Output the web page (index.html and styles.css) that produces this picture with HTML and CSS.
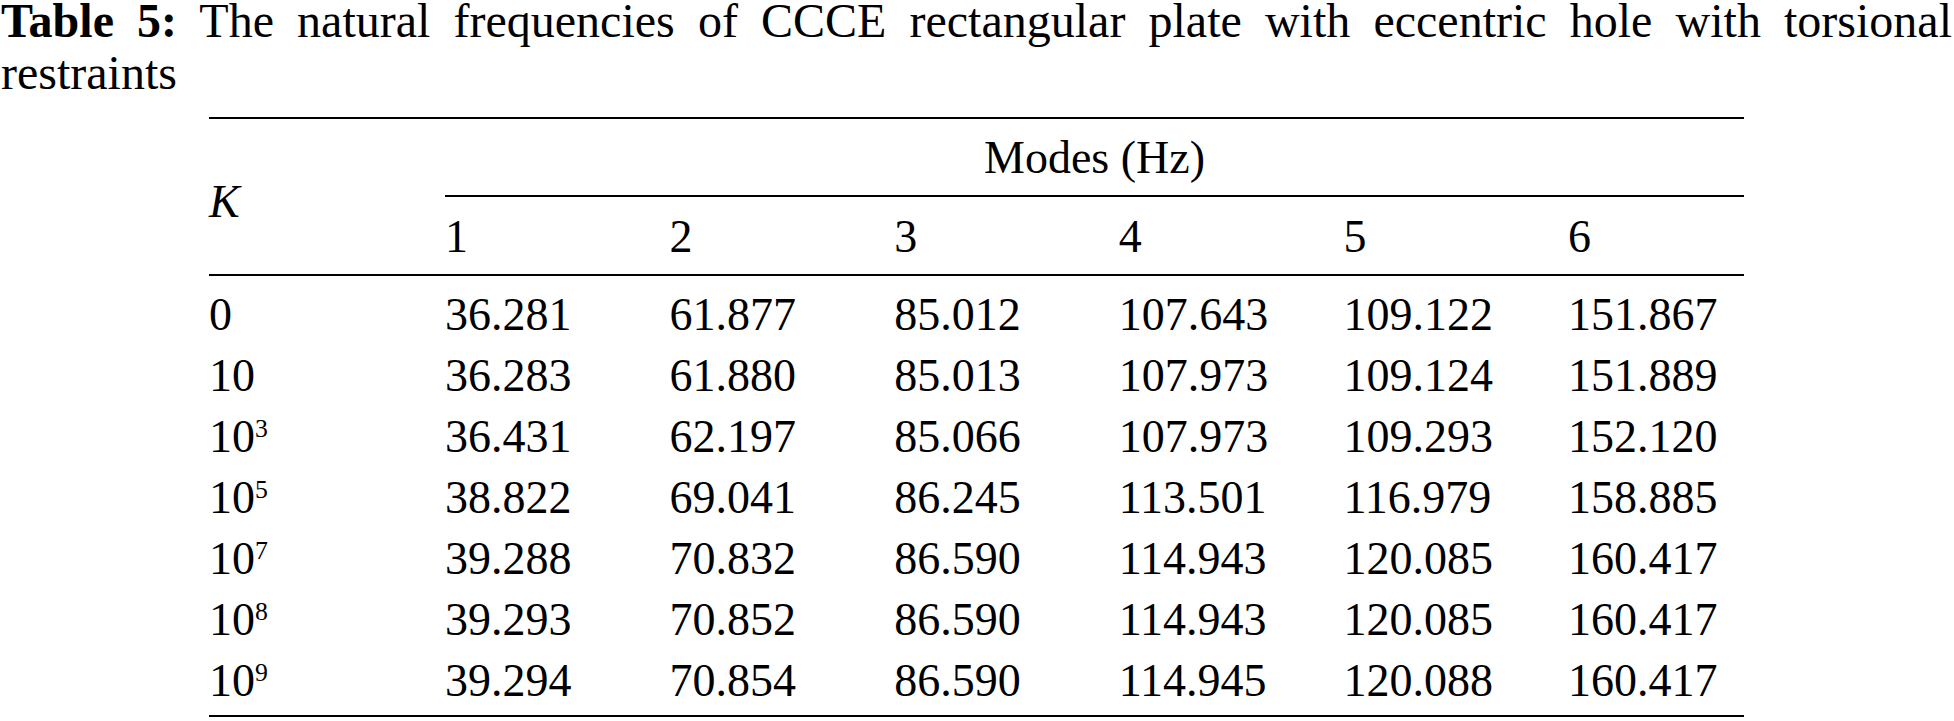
FILE: index.html
```html
<!DOCTYPE html>
<html lang="en">
<head>
<meta charset="utf-8">
<title>Table 5</title>
<link rel="stylesheet" href="styles.css">
</head>
<body>
<p class="caption"><strong>Table 5:</strong> The natural frequencies of CCCE rectangular plate with eccentric hole with torsional restraints</p>
<table class="data">
  <colgroup>
    <col class="c-k">
    <col class="c-m"><col class="c-m"><col class="c-m"><col class="c-m"><col class="c-m">
    <col class="c-last">
  </colgroup>
  <thead>
    <tr class="h1">
      <th class="k" rowspan="2"><i>K</i></th>
      <th class="modes" colspan="6">Modes (Hz)</th>
    </tr>
    <tr class="h2">
      <th>1</th><th>2</th><th>3</th><th>4</th><th>5</th><th>6</th>
    </tr>
  </thead>
  <tbody>
    <tr class="first"><td>0</td><td>36.281</td><td>61.877</td><td>85.012</td><td>107.643</td><td>109.122</td><td>151.867</td></tr>
    <tr><td>10</td><td>36.283</td><td>61.880</td><td>85.013</td><td>107.973</td><td>109.124</td><td>151.889</td></tr>
    <tr><td>10<sup>3</sup></td><td>36.431</td><td>62.197</td><td>85.066</td><td>107.973</td><td>109.293</td><td>152.120</td></tr>
    <tr><td>10<sup>5</sup></td><td>38.822</td><td>69.041</td><td>86.245</td><td>113.501</td><td>116.979</td><td>158.885</td></tr>
    <tr><td>10<sup>7</sup></td><td>39.288</td><td>70.832</td><td>86.590</td><td>114.943</td><td>120.085</td><td>160.417</td></tr>
    <tr><td>10<sup>8</sup></td><td>39.293</td><td>70.852</td><td>86.590</td><td>114.943</td><td>120.085</td><td>160.417</td></tr>
    <tr class="last"><td>10<sup>9</sup></td><td>39.294</td><td>70.854</td><td>86.590</td><td>114.945</td><td>120.088</td><td>160.417</td></tr>
  </tbody>
</table>
</body>
</html>
```

FILE: styles.css
```css
html, body {
  margin: 0;
  padding: 0;
  background: #ffffff;
  color: #000000;
}

body {
  font-family: "Liberation Serif", "Times New Roman", serif;
  width: 1954px;
}

.caption {
  margin: -5px 0 0 0;
  padding: 0 2px 0 1px;
  font-size: 48px;
  line-height: 52px;
  text-align: justify;
}

.caption strong {
  font-weight: bold;
}

.data {
  margin: 18px 0 0 209px;
  width: 1535px;
  table-layout: fixed;
  border-collapse: collapse;
  border-spacing: 0;
  font-size: 46px;
  line-height: 61px;
  border-top: 2px solid #000;
  border-bottom: 2px solid #000;
}

.c-k { width: 236px; }
.c-m { width: 224.6px; }
.c-last { width: 176px; }

.data th,
.data td {
  padding: 0;
  text-align: left;
  font-weight: normal;
  white-space: nowrap;
}

.h1 th {
  padding-top: 8px;
  padding-bottom: 7px;
}

.h1 .modes {
  text-align: center;
  border-bottom: 2px solid #000;
}

.h1 .k {
  vertical-align: top;
  padding-top: 52px;
  border-bottom: 2px solid #000;
}

.h2 th {
  padding-top: 9px;
  padding-bottom: 7px;
  border-bottom: 2px solid #000;
}

.data .first td {
  padding-top: 8px;
}

.data .last td {
  padding-bottom: 4px;
}

.data sup {
  font-size: 0.56em;
  line-height: 0;
  vertical-align: 0.58em;
}
```
